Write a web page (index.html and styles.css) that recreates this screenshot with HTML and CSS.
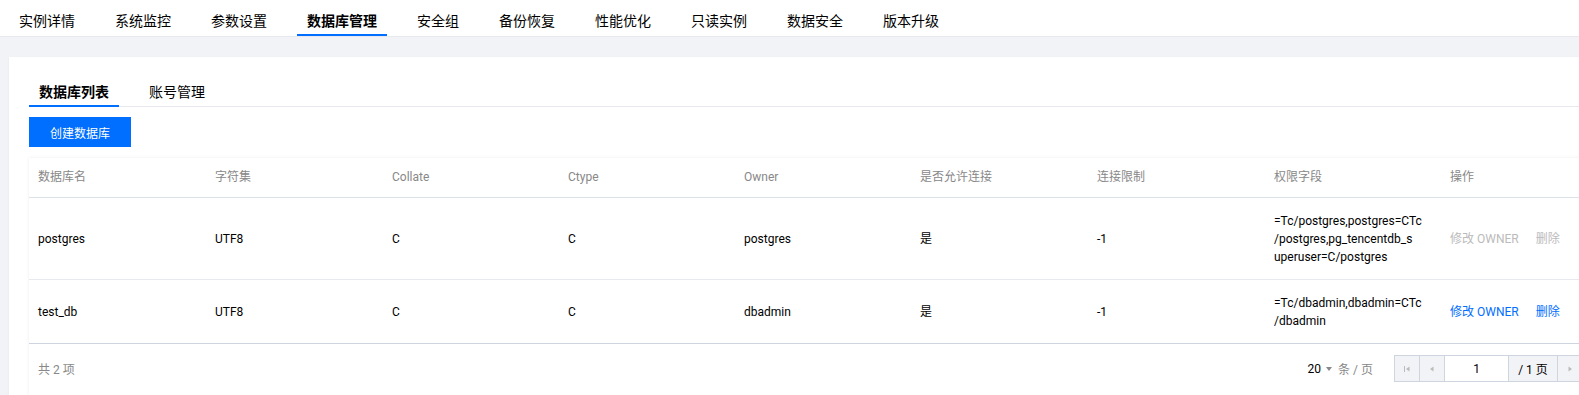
FILE: index.html
```html
<!DOCTYPE html>
<html>
<head>
	<meta charset="utf-8">
	<title>数据库管理</title>
	<link rel="stylesheet" href="styles.css">
</head>
<body>
	<div class="nav">
		<a class="nav-item">实例详情</a>
		<a class="nav-item">系统监控</a>
		<a class="nav-item">参数设置</a>
		<a class="nav-item active">数据库管理</a>
		<a class="nav-item">安全组</a>
		<a class="nav-item">备份恢复</a>
		<a class="nav-item">性能优化</a>
		<a class="nav-item">只读实例</a>
		<a class="nav-item">数据安全</a>
		<a class="nav-item">版本升级</a>
	</div>

	<div class="card">
		<div class="subtabs">
			<a class="subtab active">数据库列表</a>
			<a class="subtab">账号管理</a>
		</div>

		<button class="btn-primary">创建数据库</button>

		<div class="table-wrap">
			<table class="db-table">
				<colgroup>
					<col style="width:177px">
					<col style="width:177px">
					<col style="width:176px">
					<col style="width:176px">
					<col style="width:176px">
					<col style="width:177px">
					<col style="width:177px">
					<col style="width:176px">
					<col>
				</colgroup>
				<thead>
					<tr>
						<th>数据库名</th>
						<th>字符集</th>
						<th>Collate</th>
						<th>Ctype</th>
						<th>Owner</th>
						<th>是否允许连接</th>
						<th>连接限制</th>
						<th>权限字段</th>
						<th>操作</th>
					</tr>
				</thead>
				<tbody>
					<tr>
						<td>postgres</td>
						<td>UTF8</td>
						<td>C</td>
						<td>C</td>
						<td>postgres</td>
						<td>是</td>
						<td>-1</td>
						<td>=Tc/postgres,postgres=CTc<br>/postgres,pg_tencentdb_s<br>uperuser=C/postgres</td>
						<td><a class="link disabled">修改 OWNER</a><a class="link disabled">删除</a></td>
					</tr>
					<tr class="last">
						<td>test_db</td>
						<td>UTF8</td>
						<td>C</td>
						<td>C</td>
						<td>dbadmin</td>
						<td>是</td>
						<td>-1</td>
						<td>=Tc/dbadmin,dbadmin=CTc<br>/dbadmin</td>
						<td><a class="link">修改 OWNER</a><a class="link">删除</a></td>
					</tr>
				</tbody>
			</table>

			<div class="table-footer">
				<span class="total">共 2 项</span>
				<div class="pager">
					<span class="page-size">20<i class="caret"></i><span class="unit">条 / 页</span></span>
					<div class="pager-box">
						<span class="pg-btn">
							<svg width="8" height="8" viewBox="0 0 8 8"><rect x="1" y="1" width="1" height="6" fill="#bbb"/><path d="M6.5 1.5 L3 4 L6.5 6.5 Z" fill="#bbb"/></svg>
						</span>
						<span class="pg-btn">
							<svg width="8" height="8" viewBox="0 0 8 8"><path d="M5.5 1.5 L2 4 L5.5 6.5 Z" fill="#bbb"/></svg>
						</span>
						<span class="pg-input">1</span>
						<span class="pg-label">/ 1 页</span>
						<span class="pg-btn">
							<svg width="8" height="8" viewBox="0 0 8 8"><path d="M2.5 1.5 L6 4 L2.5 6.5 Z" fill="#bbb"/></svg>
						</span>
					</div>
				</div>
			</div>
		</div>
	</div>
</body>
</html>
```

FILE: styles.css
```css
html, body {
	overflow: hidden;
}
body {
	margin: 0;
	min-width: 1640px;
	background-color: #f2f3f6;
	font-family: Roboto, "Noto Sans CJK SC", sans-serif;
	font-size: 12px;
	color: #000;
}
a {
	cursor: pointer;
}

/* top tabs */
.nav {
	display: flex;
	gap: 20px;
	height: 36px;
	padding-left: 9px;
	background-color: #fff;
	border-bottom: 1px solid #e7e9ee;
}
.nav-item {
	box-sizing: border-box;
	height: 36px;
	padding: 11px 10px 0;
	line-height: 21px;
	font-size: 14px;
	color: #000;
	border-bottom: 2px solid transparent;
}
.nav-item.active {
	font-weight: bold;
	border-bottom-color: #006eff;
}

/* card */
.card {
	width: 1562px;
	margin: 20px 0 0 9px;
	padding: 20px;
	background-color: #fff;
	box-shadow: 0 1px 2px rgba(0, 0, 0, 0.06);
}
.subtabs {
	display: flex;
	gap: 20px;
	height: 29px;
	border-bottom: 1px solid #e7e9ee;
}
.subtab {
	box-sizing: border-box;
	height: 30px;
	padding: 5px 10px 0;
	line-height: 20px;
	font-size: 14px;
	color: #000;
	border-bottom: 2px solid transparent;
}
.subtab.active {
	font-weight: bold;
	border-bottom-color: #006eff;
}
.btn-primary {
	display: block;
	height: 30px;
	margin-top: 10px;
	padding: 0 21px;
	border: none;
	background-color: #006eff;
	color: #fff;
	font-family: inherit;
	font-size: 12px;
}

/* table */
.table-wrap {
	margin-top: 11px;
	background-color: #fff;
	box-shadow: 0 0 3px rgba(0, 0, 0, 0.08);
}
.db-table {
	width: 100%;
	table-layout: fixed;
	border-collapse: collapse;
}
.db-table th {
	padding: 10px 9px;
	line-height: 19px;
	text-align: left;
	font-weight: normal;
	color: #888;
	border-bottom: 1px solid #dde1e8;
}
.db-table td {
	padding: 14px 9px 13px;
	line-height: 18px;
	vertical-align: middle;
	border-bottom: 1px solid #e7e9ee;
}
.db-table tr.last td {
	border-bottom-color: #cfd5de;
}
.link {
	margin-right: 17px;
	color: #006eff;
}
.link.disabled {
	color: #bbb;
	cursor: default;
}

/* footer + pager */
.table-footer {
	display: flex;
	justify-content: space-between;
	align-items: center;
	padding: 11px 8px 30px 9px;
}
.total {
	color: #888;
}
.pager {
	display: flex;
	align-items: center;
	gap: 21px;
}
.page-size {
	display: flex;
	align-items: center;
}
.caret {
	width: 0;
	height: 0;
	margin: 1px 6px 0 5px;
	border-left: 3.5px solid transparent;
	border-right: 3.5px solid transparent;
	border-top: 4px solid #888;
}
.unit {
	color: #888;
}
.pager-box {
	display: flex;
	height: 25px;
	border: 1px solid #cfd5de;
}
.pg-btn, .pg-input, .pg-label {
	display: flex;
	align-items: center;
	justify-content: center;
	border-left: 1px solid #cfd5de;
}
.pg-btn {
	width: 24px;
	background-color: #f2f3f6;
}
.pg-btn:first-child {
	border-left: none;
}
.pg-input {
	width: 63px;
	background-color: #fff;
}
.pg-label {
	width: 48px;
	background-color: #f2f3f6;
}
```
